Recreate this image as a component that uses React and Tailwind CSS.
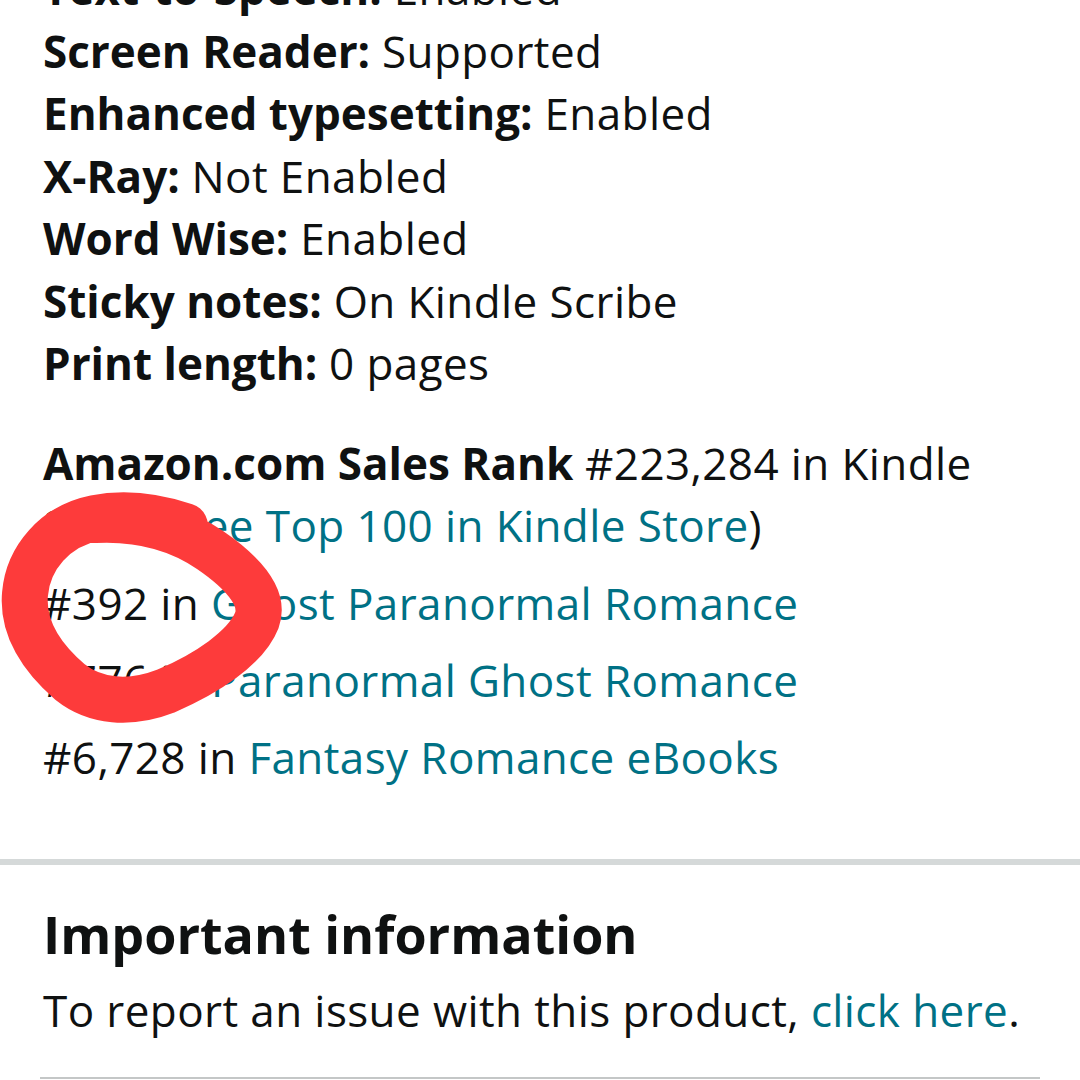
import React from 'react';

const details = [
  ['Text-to-Speech:', 'Enabled'],
  ['Screen Reader:', 'Supported'],
  ['Enhanced typesetting:', 'Enabled'],
  ['X-Ray:', 'Not Enabled'],
  ['Word Wise:', 'Enabled'],
  ['Sticky notes:', 'On Kindle Scribe'],
  ['Print length:', '0 pages'],
];

const ranks = [
  ['#392', 'Ghost Paranormal Romance'],
  ['#776', 'Paranormal Ghost Romance'],
  ['#6,728', 'Fantasy Romance eBooks'],
];

// freehand red marker loop drawn over the rank list
const Scribble = () => (
  <svg className="absolute left-0 top-[480px] pointer-events-none" width="300" height="260" viewBox="0 480 300 260">
    <path
      d="M95 520 C135 518 175 526 210 550 C248 576 264 600 257 620 C246 648 206 674 166 691 C130 705 95 702 70 682 C42 658 22 628 25 594 C28 558 55 526 95 518 C125 512 155 516 185 526"
      fill="none"
      stroke="#fd3b3b"
      strokeWidth="46"
      strokeLinecap="round"
      strokeLinejoin="round"
    />
  </svg>
);

export default function App() {
  return (
    <div className="relative w-[1080px] h-[1080px] overflow-hidden bg-white text-[#0f1111] font-['Open_Sans',sans-serif] text-[44px] leading-[62.5px] tracking-[0.4px]">
      <div className="pl-[43px] pr-[40px] -mt-[43px]">
        {details.map(([label, value]) => (
          <div key={label}>
            <span className="font-bold tracking-normal">{label}</span> {value}
          </div>
        ))}

        <div className="mt-[37px]">
          <span className="font-bold tracking-normal">Amazon.com Sales Rank</span> #223,284 in Kindle Store (
          <span className="text-[#007185]">See Top 100 in Kindle Store</span>)
        </div>

        <ul className="mt-[15px] flex flex-col gap-[14.5px]">
          {ranks.map(([rank, cat]) => (
            <li key={rank}>
              {rank} in <span className="text-[#007185]">{cat}</span>
            </li>
          ))}
        </ul>
      </div>

      <div className="mt-[71px] h-[6px] bg-[#d5d9d9]" />

      <div className="px-[43px] pt-[38px]">
        <h2 className="font-bold text-[52px] leading-[62px] tracking-normal">Important information</h2>
        <p className="mt-[14px]">
          To report an issue with this product, <span className="text-[#007185]">click here</span>.
        </p>
      </div>

      <div className="mx-[40px] mt-[35px] h-[2px] bg-[#c4c7c7]" />

      <Scribble />
    </div>
  );
}
